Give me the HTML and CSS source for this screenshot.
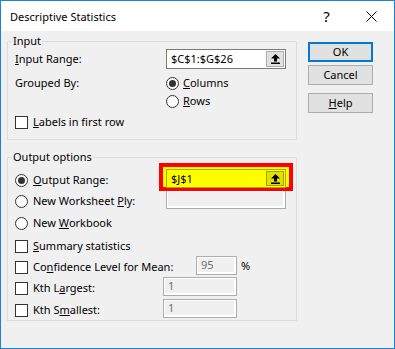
FILE: index.html
```html
<!DOCTYPE html>
<html>
<head>
    <meta charset="UTF-8">
    <meta name="viewport" content="width=device-width, initial-scale=1.0">
    <title>Descriptive Statistics</title>
    <link rel="stylesheet" href="styles.css">
</head>
<body>
    <div class="window">
        <div class="titlebar">
            <span class="title">Descriptive Statistics</span>
            <span class="tb-btn help-q">?</span>
            <span class="tb-btn">
                <svg width="11" height="11" viewBox="0 0 11 11"><path d="M0.5 0.5 L10.5 10.5 M10.5 0.5 L0.5 10.5" stroke="#000" stroke-width="1"/></svg>
            </span>
        </div>
        <div class="content">
            <div class="groups">
                <fieldset class="group group-input">
                    <legend>Input</legend>
                    <div class="row r-range">
                        <span class="label w-151"><u>I</u>nput Range:</span>
                        <div class="refedit">
                            <span class="val">$C$1:$G$26</span>
                            <span class="ref-btn">
                                <svg width="9" height="10" viewBox="0 0 9 10"><polygon points="4.5,0 9,4.5 6,4.5 6,7.5 3,7.5 3,4.5 0,4.5" fill="#000"/><rect x="0" y="8.5" width="9" height="1.5" fill="#000"/></svg>
                            </span>
                        </div>
                    </div>
                    <div class="row r-grouped">
                        <span class="label w-151">Grouped By:</span>
                        <span class="radio on"></span><span class="opt-text"><u>C</u>olumns</span>
                    </div>
                    <div class="row r-rows">
                        <span class="label w-151"></span>
                        <span class="radio"></span><span class="opt-text"><u>R</u>ows</span>
                    </div>
                    <div class="row r-labels">
                        <span class="check"></span><span class="opt-text wide"><u>L</u>abels in first row</span>
                    </div>
                </fieldset>

                <fieldset class="group group-output">
                    <legend>Output options</legend>
                    <div class="row out r-out">
                        <div class="opt w-151"><span class="radio on"></span><span class="opt-text"><u>O</u>utput Range:</span></div>
                        <div class="refedit hl">
                            <span class="val">$J$1</span>
                            <span class="ref-btn">
                                <svg width="9" height="10" viewBox="0 0 9 10"><polygon points="4.5,0 9,4.5 6,4.5 6,7.5 3,7.5 3,4.5 0,4.5" fill="#000"/><rect x="0" y="8.5" width="9" height="1.5" fill="#000"/></svg>
                            </span>
                        </div>
                    </div>
                    <div class="row out r-ply">
                        <div class="opt w-151"><span class="radio"></span><span class="opt-text">New Worksheet <u>P</u>ly:</span></div>
                        <div class="box box-wide"></div>
                    </div>
                    <div class="row out r-book">
                        <div class="opt"><span class="radio"></span><span class="opt-text">New <u>W</u>orkbook</span></div>
                    </div>
                    <div class="row out r-sum">
                        <div class="opt"><span class="check"></span><span class="opt-text"><u>S</u>ummary statistics</span></div>
                    </div>
                    <div class="row out r-conf">
                        <div class="opt w-181"><span class="check"></span><span class="opt-text">Co<u>n</u>fidence Level for Mean:</span></div>
                        <div class="box box-small">95</div>
                        <span class="pct">%</span>
                    </div>
                    <div class="row out r-large">
                        <div class="opt w-148"><span class="check"></span><span class="opt-text">Kth L<u>a</u>rgest:</span></div>
                        <div class="box box-mid">1</div>
                    </div>
                    <div class="row out r-small">
                        <div class="opt w-148"><span class="check"></span><span class="opt-text">Kth S<u>m</u>allest:</span></div>
                        <div class="box box-mid">1</div>
                    </div>
                </fieldset>
            </div>

            <div class="buttons">
                <button class="btn btn-default">OK</button>
                <button class="btn btn-cancel">Cancel</button>
                <button class="btn btn-help"><u>H</u>elp</button>
            </div>
        </div>
    </div>
</body>
</html>
```

FILE: styles.css
```css
body {
    margin: 0;
    font-family: "Noto Sans", sans-serif;
    font-size: 11px;
    color: #000;
}
.window {
    width: 395px;
    height: 349px;
    box-sizing: border-box;
    border: 1px solid #1883d7;
    background: #f0f0f0;
    display: flex;
    flex-direction: column;
}
.titlebar {
    height: 30px;
    flex: none;
    background: #fff;
    display: flex;
    align-items: center;
    padding-left: 9px;
}
.title {
    flex: 1;
}
.tb-btn {
    width: 45px;
    height: 30px;
    display: flex;
    align-items: center;
    justify-content: center;
}
.help-q {
    font-size: 15px;
}
.content {
    display: flex;
    align-items: flex-start;
    padding: 2px 0 0 6px;
}
.groups {
    width: 290px;
}
.group {
    margin: 0;
    padding: 0 7px 8px 7px;
    border: 1px solid #dcdcdc;
    min-width: 0;
}
.group legend {
    padding: 0 1px;
    margin-left: -3px;
    line-height: 16px;
}
.group-output {
    margin-top: 9px;
    padding-bottom: 0;
}
.row {
    display: flex;
    align-items: center;
    height: 20px;
    line-height: 16px;
}
.r-grouped { height: 18px; margin-top: 5px; }
.r-rows { height: 18px; }
.r-labels { height: 18px; margin-top: 3px; }

.r-out { margin-top: 5px; position: relative; z-index: 1; }
.r-ply { margin-top: 1px; }
.r-book { margin-top: 2px; }
.r-sum { margin-top: 3px; }
.r-conf { margin-top: 1px; }
.r-large { margin-top: 1px; }
.r-small { margin-top: 2px; }

.label,
.opt {
    flex: none;
}
.opt {
    display: flex;
    align-items: center;
}
.w-151 { width: 151px; }
.w-181 { width: 181px; }
.w-148 { width: 148px; }
.opt-text {
    margin-left: 5px;
    white-space: nowrap;
}
.r-grouped .opt-text,
.r-rows .opt-text {
    margin-left: 4px;
}
.radio {
    width: 13px;
    height: 13px;
    box-sizing: border-box;
    border: 1px solid #333;
    border-radius: 50%;
    background: #fff;
    display: flex;
    align-items: center;
    justify-content: center;
    flex: none;
}
.radio.on::after {
    content: "";
    width: 7px;
    height: 7px;
    border-radius: 50%;
    background: #333;
}
.check {
    width: 13px;
    height: 13px;
    box-sizing: border-box;
    border: 1px solid #333;
    background: #fff;
    flex: none;
}
.refedit {
    width: 120px;
    height: 20px;
    box-sizing: border-box;
    border: 1px solid #7a7a7a;
    background: #fff;
    padding: 1px;
    display: flex;
    align-items: center;
    position: relative;
}
.refedit .val {
    flex: 1;
    padding-left: 3px;
}
.ref-btn {
    width: 18px;
    height: 16px;
    box-sizing: border-box;
    border: 1px solid #adadad;
    background: #e1e1e1;
    display: flex;
    align-items: center;
    justify-content: center;
}
.out .refedit {
    height: 19px;
    margin-bottom: 3px;
}
.out .refedit .ref-btn {
    height: 15px;
}
/* highlighted range, drawn over the dialog */
.refedit.hl {
    background: #ffff00;
    border-color: #a8a800;
}
.refedit.hl .ref-btn {
    background: #e1e100;
    border-color: #a0a000;
}
.refedit.hl::before {
    content: "";
    position: absolute;
    top: -7px;
    left: -8px;
    right: -8px;
    bottom: -4px;
    border: 4px solid #ff0000;
    background: #ffff00;
    z-index: -1;
}
.box {
    height: 19px;
    box-sizing: border-box;
    margin-bottom: 3px;
    border: 1px solid #adadad;
    background: #f0f0f0;
    box-shadow: inset 1px 1px 0 #fff, inset -2px -2px 0 #fff;
    color: #6d6d6d;
    padding-left: 4px;
    line-height: 16px;
}
.box-wide { width: 120px; }
.box-small { width: 41px; }
.box-mid { width: 74px; }
.pct {
    margin-left: 4px;
    margin-bottom: 2px;
}
.buttons {
    display: flex;
    flex-direction: column;
    margin-left: 11px;
    padding-top: 9px;
}
.btn {
    width: 65px;
    height: 20px;
    box-sizing: border-box;
    padding: 0;
    border: 1px solid #adadad;
    background: #e1e1e1;
    font-family: "Noto Sans", sans-serif;
    font-size: 11px;
    color: #000;
    line-height: 16px;
}
.btn-default {
    border: 2px solid #0078d7;
}
.btn-cancel {
    margin-top: 3px;
}
.btn-help {
    margin-top: 8px;
}
```
